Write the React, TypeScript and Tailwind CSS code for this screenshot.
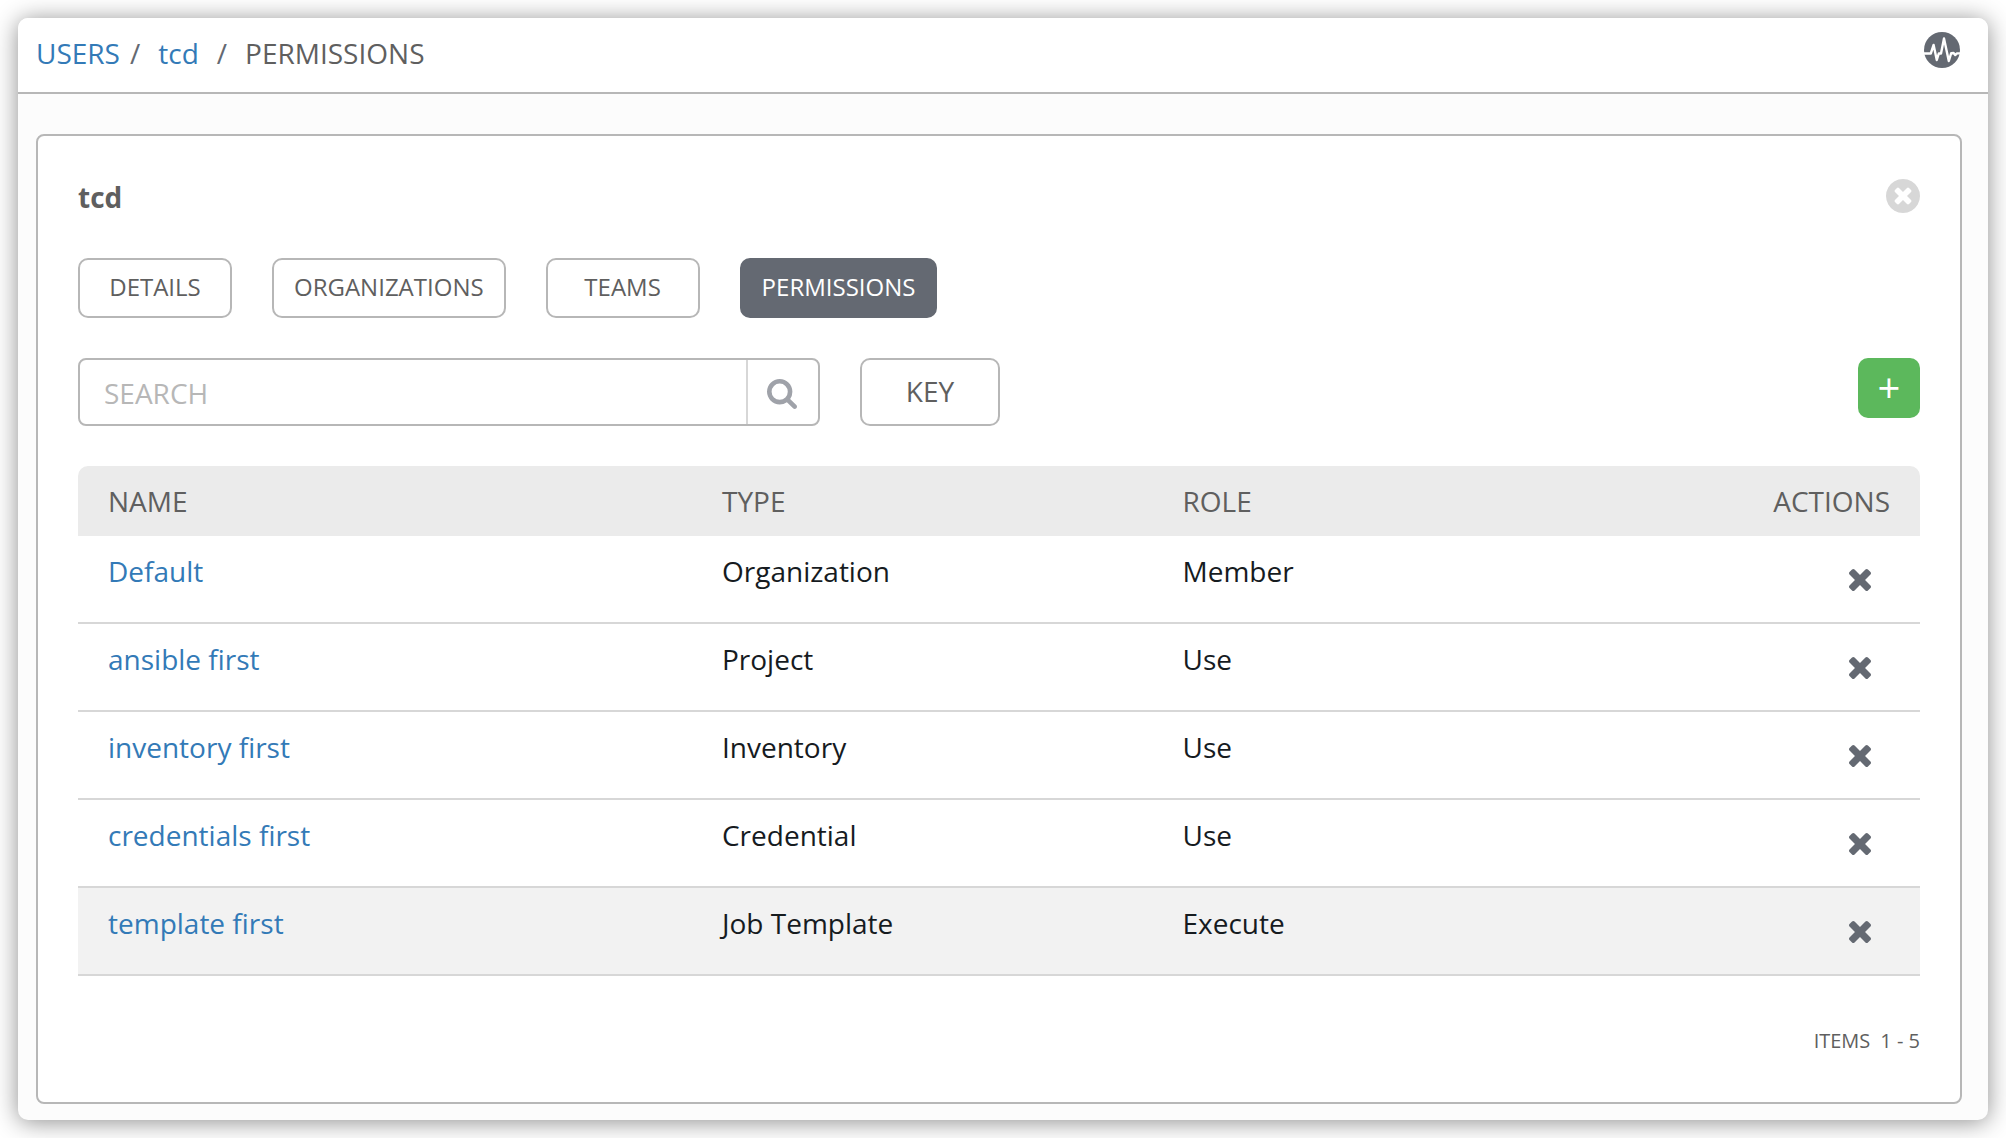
import React from 'react';

interface Permission {
  name: string;
  type: string;
  role: string;
}

const permissions: Permission[] = [
  { name: 'Default', type: 'Organization', role: 'Member' },
  { name: 'ansible first', type: 'Project', role: 'Use' },
  { name: 'inventory first', type: 'Inventory', role: 'Use' },
  { name: 'credentials first', type: 'Credential', role: 'Use' },
  { name: 'template first', type: 'Job Template', role: 'Execute' },
];

const tabs = ['DETAILS', 'ORGANIZATIONS', 'TEAMS', 'PERMISSIONS'];
const activeTab = 'PERMISSIONS';
const highlighted = 'template first';

const ActivityIcon = () => (
  <svg className="w-9 h-9" viewBox="0 0 36 36" aria-hidden="true">
    <circle cx="18" cy="18" r="18" fill="#646972" />
    <path
      d="M0 21.5H6.8L9.6 13L12.8 28L14.8 21.5H17L20 6.5L24.8 29L27.2 21.2L29.6 21L31.2 23L33 21.4H36"
      fill="none"
      stroke="#fff"
      strokeWidth="2.4"
      strokeLinejoin="round"
    />
  </svg>
);

const CloseIcon = () => (
  <svg className="w-[34px] h-[34px]" viewBox="128 128 1536 1536" fill="currentColor" aria-hidden="true">
    <path d="M1277 1122q0-26-19-45l-181-181 181-181q19-19 19-45 0-27-19-46l-90-90q-19-19-46-19-26 0-45 19l-181 181-181-181q-19-19-45-19-27 0-46 19l-90 90q-19 19-19 46 0 26 19 45l181 181-181 181q-19 19-19 45 0 27 19 46l90 90q19 19 46 19 26 0 45-19l181-181 181 181q19 19 45 19 27 0 46-19l90-90q19-19 19-46zm387-226q0 209-103 385.5t-279.5 279.5-385.5 103-385.5-103-279.5-279.5-103-385.5 103-385.5 279.5-279.5 385.5-103 385.5 103 279.5 279.5 103 385.5z" />
  </svg>
);

const RemoveIcon = () => (
  <svg className="w-[22px] h-[22px]" viewBox="302 366 1188 1188" fill="currentColor" aria-hidden="true">
    <path d="M1490 1322q0 40-28 68l-136 136q-28 28-68 28t-68-28l-294-294-294 294q-28 28-68 28t-68-28l-136-136q-28-28-28-68t28-68l294-294-294-294q-28-28-28-68t28-68l136-136q28-28 68-28t68 28l294 294 294-294q28-28 68-28t68 28l136 136q28 28 28 68t-28 68l-294 294 294 294q28 28 28 68z" />
  </svg>
);

const SearchIcon = () => (
  <svg className="w-[30px] h-[30px]" viewBox="64 128 1664 1664" fill="currentColor" aria-hidden="true">
    <path d="M1216 832q0-185-131.5-316.5t-316.5-131.5-316.5 131.5-131.5 316.5 131.5 316.5 316.5 131.5 316.5-131.5 131.5-316.5zm512 832q0 52-38 90t-90 38q-54 0-90-38l-343-342q-179 124-399 124-143 0-273.5-55.5t-225-150-150-225-55.5-273.5 55.5-273.5 150-225 225-150 273.5-55.5 273.5 55.5 225 150 150 225 55.5 273.5q0 220-124 399l343 343q37 37 37 90z" />
  </svg>
);

const Header = () => (
  <header className="flex items-start justify-between bg-white border-b-2 border-[#b7b7b7] pl-[18px] pr-7 pt-[14px] h-[76px]">
    <nav aria-label="Breadcrumb" className="flex mt-0.5 text-[28px] leading-[38px] text-[#646972]">
      <a href="#users" className="text-[#337ab7]">USERS</a>
      <span className="ml-2.5">/</span>
      <a href="#tcd" className="ml-[18px] text-[#337ab7]">tcd</a>
      <span className="ml-[18px]">/</span>
      <span className="ml-[18px] text-[#5f5f5f]">PERMISSIONS</span>
    </nav>
    <button type="button" aria-label="Activity stream">
      <ActivityIcon />
    </button>
  </header>
);

const Toolbar = () => (
  <div className="flex items-start mt-10">
    <form className="flex w-[742px] h-[68px] border-2 border-[#b7b7b7] rounded-lg overflow-hidden">
      <input
        type="text"
        aria-label="Search"
        placeholder="SEARCH"
        className="flex-1 min-w-0 px-6 pt-0.5 text-[28px] leading-[38px] outline-none placeholder:text-[#b7b7b7]"
      />
      <button
        type="button"
        aria-label="Run search"
        className="flex items-center justify-center w-[72px] pt-1 pr-0.5 border-l-2 border-[#d7d7d7] text-[#9fa2a9]"
      >
        <SearchIcon />
      </button>
    </form>
    <button
      type="button"
      className="ml-10 w-[140px] h-[68px] pb-0.5 border-2 border-[#b7b7b7] rounded-[10px] text-[28px] leading-[38px] text-[#5f5f5f]"
    >
      KEY
    </button>
    <button
      type="button"
      aria-label="Add permission"
      className="ml-auto flex items-center justify-center w-[62px] h-[60px] rounded-[10px] bg-[#5cb85c] text-white text-[40px] leading-none"
    >
      +
    </button>
  </div>
);

const PermissionsTable = () => (
  <table className="w-full mt-10 table-fixed border-separate border-spacing-0 text-left text-[28px] leading-[38px]">
    <thead className="text-[#5f5f5f]">
      <tr className="h-[70px] *:bg-[#ebebeb]">
        <th className="w-1/3 pl-[30px] font-normal rounded-tl-[10px]">NAME</th>
        <th className="w-1/4 pl-[30px] font-normal">TYPE</th>
        <th className="w-1/4 pl-[30px] font-normal">ROLE</th>
        <th className="w-1/6 pr-[30px] font-normal text-right rounded-tr-[10px]">ACTIONS</th>
      </tr>
    </thead>
    <tbody className="text-[#161b1f]">
      {permissions.map(p => (
        <tr
          key={p.name}
          className={`h-[88px] align-top *:border-b-2 *:border-[#d7d7d7] *:pt-4 ${p.name === highlighted ? 'bg-[#f2f2f2]' : ''}`}
        >
          <td className="pl-[30px]">
            <a href="#resource" className="text-[#337ab7]">{p.name}</a>
          </td>
          <td className="pl-[30px]">{p.type}</td>
          <td className="pl-[30px]">{p.role}</td>
          <td className="pr-[49px]">
            <button
              type="button"
              aria-label={`Remove ${p.name}`}
              className="flex items-center justify-end ml-auto h-14 text-[#646972]"
            >
              <RemoveIcon />
            </button>
          </td>
        </tr>
      ))}
    </tbody>
  </table>
);

export default function App() {
  return (
    <div className="min-h-screen flex flex-col p-[18px] bg-white font-['Open_Sans',sans-serif]">
      <div className="flex-1 flex flex-col bg-[#fcfcfc] rounded-[10px] overflow-hidden shadow-[0_2px_24px_rgba(0,0,0,0.45)]">
        <Header />

        <main className="flex-1 mt-10 ml-[18px] mr-[26px] mb-4 px-10 bg-white border-2 border-[#b7b7b7] rounded-lg">
          <div className="flex items-center justify-between mt-[42px]">
            <h1 className="text-[28px] leading-[38px] font-bold text-[#5f5f5f]">tcd</h1>
            <button type="button" aria-label="Close" className="mb-0.5 text-[#d7d7d7]">
              <CloseIcon />
            </button>
          </div>

          <div className="flex gap-10 mt-[42px]">
            {tabs.map(tab => (
              <button
                key={tab}
                type="button"
                className={`h-[60px] min-w-[154px] px-5 pb-0.5 border-2 rounded-[10px] text-2xl ${
                  tab === activeTab
                    ? 'bg-[#646972] border-[#646972] text-white'
                    : 'bg-white border-[#b7b7b7] text-[#5f5f5f]'
                }`}
              >
                {tab}
              </button>
            ))}
          </div>

          <Toolbar />
          <PermissionsTable />

          <div className="flex justify-end gap-2.5 mt-[51px] text-xl text-[#5f5f5f]">
            <span>ITEMS</span>
            <span>1 - 5</span>
          </div>
        </main>
      </div>
    </div>
  );
}
